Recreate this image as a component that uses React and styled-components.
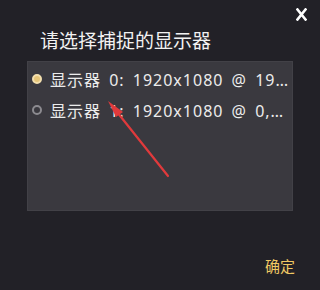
import styled, { createGlobalStyle } from "styled-components"

const Global = createGlobalStyle`
    html, body {
        margin: 0;
        padding: 0;
        background: #222127;
    }
    body {
        font-family: "Noto Sans", "Noto Sans CJK SC", sans-serif;
    }
`;

const Dialog = styled.div`
    position: relative;
    width: 320px;
    height: 290px;
    background: #222127;
    display: flex;
    flex-direction: column;
    overflow: hidden;
`;
const TopBar = styled.div`
    height: 28px;
    display: flex;
    justify-content: flex-end;
    align-items: flex-start;
    padding: 8px 13px 0 0;
    box-sizing: border-box;
`;
const CloseButton = styled.button`
    width: 11px;
    height: 13px;
    padding: 0;
    border: none;
    background: transparent;
    cursor: pointer;
    display: flex;
    svg { display: block; }
`;
const Title = styled.h2`
    margin: 0 0 6px 0;
    padding-left: 40px;
    font-size: 19px;
    line-height: 27px;
    font-weight: 400;
    color: #f2f2f2;
`;
const Panel = styled.div`
    margin: 0 27px;
    height: 150px;
    box-sizing: border-box;
    background: #3a393f;
    border: 1px solid #424147;
    padding: 1px 2px 0 4px;
    display: flex;
    flex-direction: column;
`;
const Row = styled.label`
    height: 31px;
    display: flex;
    align-items: center;
    gap: 8px;
    cursor: pointer;
    min-width: 0;
`;
const Radio = styled.span`
    flex: none;
    width: 10px;
    height: 10px;
    border-radius: 50%;
    box-sizing: border-box;
    border: 2px solid ${p => (p.$checked ? "#f3dfae" : "#8c8b90")};
    background: ${p => (p.$checked ? "#e6c578" : "transparent")};
`;
const RowText = styled.span`
    flex: 1;
    min-width: 0;
    font-size: 16px;
    letter-spacing: 1px;
    word-spacing: 3px;
    color: #ececec;
    white-space: nowrap;
    overflow: hidden;
    text-overflow: ellipsis;
`;
const Footer = styled.div`
    margin-top: 45px;
    display: flex;
    justify-content: flex-end;
    padding-right: 25px;
`;
const OkButton = styled.button`
    border: none;
    background: transparent;
    padding: 0;
    font-family: "Noto Sans CJK SC", sans-serif;
    font-size: 15px;
    line-height: 20px;
    color: #f0c864;
    cursor: pointer;
`;
const Annotation = styled.svg`
    position: absolute;
    left: 0;
    top: 0;
    pointer-events: none;
`;

const screens = [
    { id: 0, text: "显示器 0: 1920x1080 @ 1920,0", checked: true },
    { id: 1, text: "显示器 1: 1920x1080 @ 0,1080", checked: false },
];

export default function App() {
    return (
        <Dialog>
            <Global />
            <TopBar>
                <CloseButton aria-label="close">
                    <svg width="11" height="13" viewBox="0 0 11 13">
                        <path d="M1.5 1.5 L9.5 11.5 M9.5 1.5 L1.5 11.5" stroke="#fff" strokeWidth="2.6" strokeLinecap="square" />
                    </svg>
                </CloseButton>
            </TopBar>
            <Title>请选择捕捉的显示器</Title>
            <Panel>
                {screens.map(s => (
                    <Row key={s.id}>
                        <Radio $checked={s.checked} />
                        <RowText>{s.text}</RowText>
                    </Row>
                ))}
            </Panel>
            <Footer>
                <OkButton>确定</OkButton>
            </Footer>
            <Annotation width="320" height="290" viewBox="0 0 320 290">
                <line x1="168" y1="176" x2="117" y2="112" stroke="#e03a3c" strokeWidth="2.2" strokeLinecap="round" />
                <polygon points="108,101 123,112 116,117" fill="#e03a3c" />
            </Annotation>
        </Dialog>
    )
}
